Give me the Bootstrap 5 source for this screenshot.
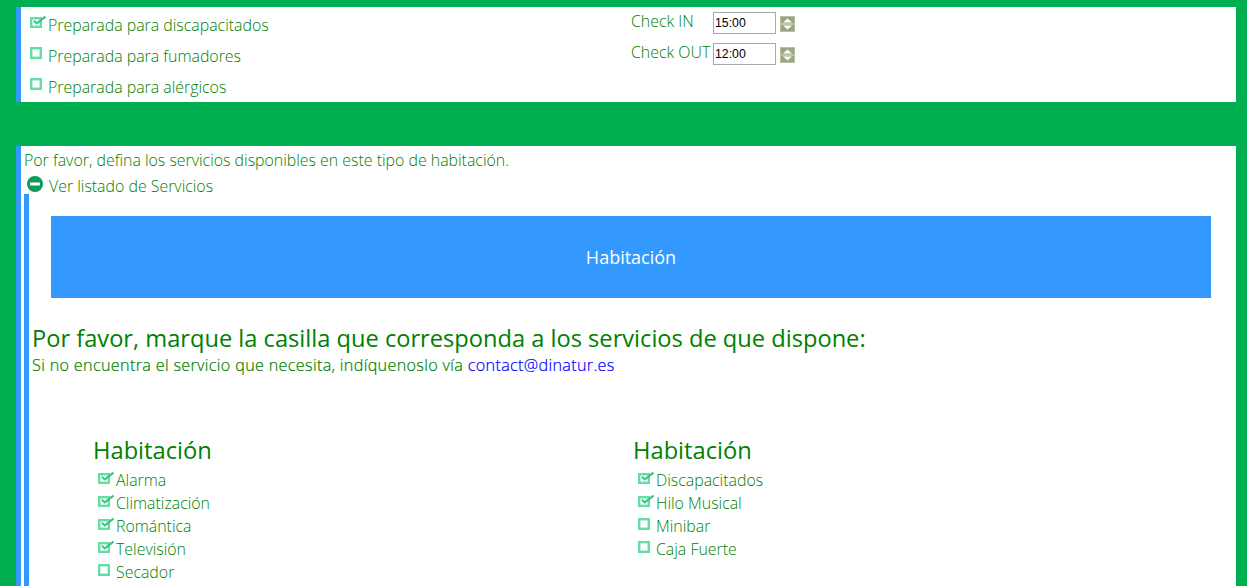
<!DOCTYPE html>
<html lang="es"><head><meta charset="utf-8"><title>Habitación</title>
<link href="https://cdn.jsdelivr.net/npm/bootstrap@5.3.0/dist/css/bootstrap.min.css" rel="stylesheet">
<style>
html,body{height:586px;overflow:hidden}
body{background:#00b050;font-family:"Open Sans",sans-serif;font-weight:300;color:#008000;font-size:15.9px;line-height:22px;padding:7px 11px 0 16px}
.panel-a{background:#fff;border-left:5px solid #3399ff;height:95px;margin-bottom:44px}
.panel-b{background:#fff;border-left:5px solid #3399ff;height:440px}
.opts{width:610px;padding:3px 0 0 9px}
.opt{height:31px;display:flex;align-items:flex-start;padding-top:4px}
.tick{width:18px;flex:none;height:16px;position:relative;top:1px}
.times{padding-top:3px}
.time-row{height:31px;display:flex;align-items:flex-start}
.time-label{width:82px;color:#008000}
.time-input{width:63px;height:22px;border:1px solid #a9a9a9;font:12.3px/20px "Liberation Sans",sans-serif;color:#000;padding:0 1px;margin-top:2px;background:#fff}
.spin{width:15px;height:16px;margin:6px 0 0 4px}
.intro{padding:3px 0 0 3px;height:26px}
.toggle{height:22px;padding:3px 0 0 6px;display:flex;align-items:flex-start;gap:6px}
.toggle svg{margin-top:1px}
.nested{border-left:5px solid #3399ff;margin:0 0 0 3px;padding:22px 0 0 22px;height:392px}
.banner{background:#3399ff;color:#fff;width:1160px;height:82px;font-weight:400;font-size:18px}
.lead-h{font-size:23.65px;font-weight:400;line-height:32px;margin:24px 0 0 -19px;color:#008000}
.lead-s{font-size:16.2px;letter-spacing:.32px;font-weight:300;line-height:22px;margin:0 0 0 -19px;color:#008000;-webkit-text-stroke:.2px #008000}
.lead-s a{color:#0000ff;text-decoration:none;-webkit-text-stroke:.2px #0000ff}
.cols{margin:58px 0 0 42px}
.svc{width:540px}
.svc-h{font-size:23.7px;font-weight:400;line-height:32px;margin-bottom:3px}
.svc-i{height:23px;padding-left:5px;display:flex;align-items:flex-start}
.svc-i .tick{top:2px}
</style></head><body>
<svg width="0" height="0" class="d-block"><defs>
<symbol id="on" viewBox="0 0 18 16"><rect x="1.2" y="3.2" width="9.6" height="8.6" fill="#fff" stroke="#66dda4" stroke-width="2.4"/><path d="M3.8 5.8l3 2.6 8.7-6.8" fill="none" stroke="#35c585" stroke-width="2"/></symbol>
<symbol id="off" viewBox="0 0 18 16"><rect x="1.2" y="2.2" width="9.6" height="9.6" fill="#fff" stroke="#66dda4" stroke-width="2.4"/></symbol>
<symbol id="sp" viewBox="0 0 15 16"><rect width="15" height="16" rx="1" fill="#9aa67f"/><rect x=".5" y=".5" width="14" height="15" rx="1" fill="none" stroke="#b9c2a3"/><path d="M1 8h13" stroke="#dfe4d4"/><path d="M7.5 2.5l4.5 4h-9zM7.5 13.5l4.5-4h-9z" fill="#fff"/></symbol>
</defs></svg>
<section class="panel-a d-flex">
  <div class="opts">
    <div class="opt"><svg class="tick"><use href="#on"/></svg>Preparada para discapacitados</div>
    <div class="opt"><svg class="tick"><use href="#off"/></svg>Preparada para fumadores</div>
    <div class="opt"><svg class="tick"><use href="#off"/></svg>Preparada para alérgicos</div>
  </div>
  <div class="times">
    <div class="time-row"><span class="time-label">Check IN</span><div class="time-input">15:00</div><svg class="spin"><use href="#sp"/></svg></div>
    <div class="time-row"><span class="time-label">Check OUT</span><div class="time-input">12:00</div><svg class="spin"><use href="#sp"/></svg></div>
  </div>
</section>
<section class="panel-b">
  <div class="intro">Por favor, defina los servicios disponibles en este tipo de habitación.</div>
  <div class="toggle"><svg width="16" height="16" viewBox="0 0 16 16" class="flex-none"><circle cx="8" cy="8" r="8" fill="#0c9c58"/><rect x="3" y="6.5" width="10" height="3" fill="#fff"/></svg>Ver listado de Servicios</div>
  <div class="nested">
    <div class="banner d-flex align-items-center justify-content-center">Habitación</div>
    <div class="lead-h">Por favor, marque la casilla que corresponda a los servicios de que dispone:</div>
    <div class="lead-s">Si no encuentra el servicio que necesita, indíquenoslo vía <a href="#">contact@dinatur.es</a></div>
    <div class="cols d-flex">
      <div class="svc">
        <div class="svc-h">Habitación</div>
        <div class="svc-i"><svg class="tick"><use href="#on"/></svg>Alarma</div>
        <div class="svc-i"><svg class="tick"><use href="#on"/></svg>Climatización</div>
        <div class="svc-i"><svg class="tick"><use href="#on"/></svg>Romántica</div>
        <div class="svc-i"><svg class="tick"><use href="#on"/></svg>Televisión</div>
        <div class="svc-i"><svg class="tick"><use href="#off"/></svg>Secador</div>
      </div>
      <div class="svc">
        <div class="svc-h">Habitación</div>
        <div class="svc-i"><svg class="tick"><use href="#on"/></svg>Discapacitados</div>
        <div class="svc-i"><svg class="tick"><use href="#on"/></svg>Hilo Musical</div>
        <div class="svc-i"><svg class="tick"><use href="#off"/></svg>Minibar</div>
        <div class="svc-i"><svg class="tick"><use href="#off"/></svg>Caja Fuerte</div>
      </div>
    </div>
  </div>
</section>
<script src="https://cdn.jsdelivr.net/npm/bootstrap@5.3.0/dist/js/bootstrap.bundle.min.js"></script>
</body></html>
